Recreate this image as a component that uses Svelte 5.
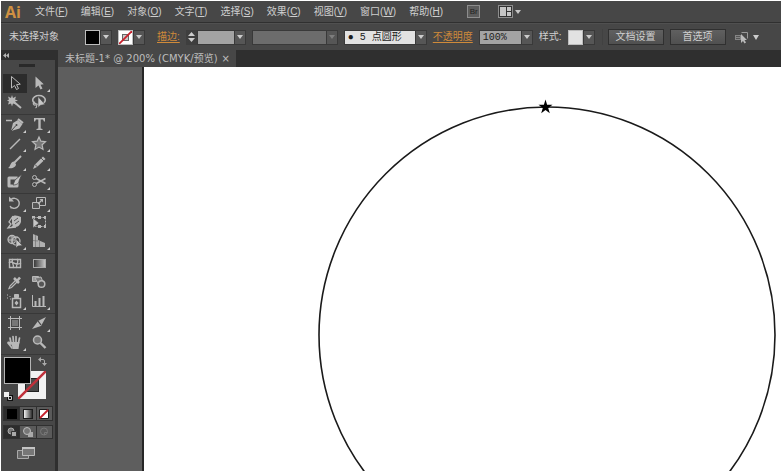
<script>
    let menus = [
        {name: "文件", key: "F"},
        {name: "编辑", key: "E"},
        {name: "对象", key: "O"},
        {name: "文字", key: "T"},
        {name: "选择", key: "S"},
        {name: "效果", key: "C"},
        {name: "视图", key: "V"},
        {name: "窗口", key: "W"},
        {name: "帮助", key: "H"},
    ]

    // every group is a block between two separators, tools go left, right, left...
    let toolGroups = [
        ["selection", "direct", "wand", "lasso"],
        ["pen", "type", "line", "star", "brush", "pencil", "blob", "scissors"],
        ["rotate", "scale", "warp", "transform", "builder", "perspective"],
        ["mesh", "gradient", "eyedropper", "blend", "spray", "graph"],
        ["artboard", "slice", "hand", "zoom"],
    ]
    let noFlyout = ["selection", "wand", "lasso", "blob", "transform", "mesh", "gradient", "blend", "artboard", "zoom"]

    let activeTool = "selection"
    let opacity = "100%"
</script>

<div class="app">
    <header class="menuBar">
        <span class="logo">Ai</span>
        <nav>
            {#each menus as menu (menu.key)}
                <button class="menuItem">{menu.name}(<u>{menu.key}</u>)</button>
            {/each}
        </nav>
        <button class="bridge" aria-label="Bridge">Br</button>
        <button class="arrange" aria-label="Arrange documents">
            <svg width="24" height="13" viewBox="0 0 24 13">
                <rect x="0.5" y="0.5" width="14" height="12" fill="#333" stroke="#8d8d8d"/>
                <path d="M2 2h6v9H2zM9 2h4v4H9zM9 7h4v4H9z" fill="#c6c6c6"/>
                <path d="M17 5h6l-3 4z" fill="#c6c6c6"/>
            </svg>
        </button>
    </header>

    <div class="controlBar">
        <span class="status">未选择对象</span>
        <button class="swatch" aria-label="Fill">
            <span class="chip black"></span>
            <span class="arrow"></span>
        </button>
        <button class="swatch" aria-label="Stroke">
            <span class="chip">
                <svg width="13" height="13" viewBox="0 0 13 13">
                    <rect x="3.5" y="3.5" width="6" height="6" fill="#ccc" stroke="#666"/>
                    <path d="M0 13L13 0" stroke="#c8212c" stroke-width="1.8"/>
                </svg>
            </span>
            <span class="arrow"></span>
        </button>
        <a class="link" href="#stroke">描边:</a>
        <div class="stroke">
            <div class="spinner">
                <button aria-label="Increase"><svg width="7" height="4" viewBox="0 0 7 4"><path d="M0 4h7L3.500 0z" fill="#ccc"/></svg></button>
                <button aria-label="Decrease"><svg width="7" height="4" viewBox="0 0 7 4"><path d="M0 0h7L3.500 4z" fill="#ccc"/></svg></button>
            </div>
            <div class="combo weight">
                <select aria-label="描边"><option></option></select>
                <span class="arrow"></span>
            </div>
        </div>
        <div class="combo profile">
            <select aria-label="Width profile" disabled><option></option></select>
            <span class="arrow"></span>
        </div>
        <div class="combo brushes">
            <select aria-label="Brush"><option>● 5 点圆形</option></select>
            <span class="arrow"></span>
        </div>
        <a class="link" href="#opacity">不透明度</a>
        <div class="combo opacity">
            <select aria-label="不透明度" bind:value={opacity}><option>100%</option></select>
            <span class="arrow"></span>
        </div>
        <span>样式:</span>
        <button class="swatch" aria-label="样式">
            <span class="chip light"></span>
            <span class="arrow"></span>
        </button>
        <div class="barButtons">
            <button class="barButton">文档设置</button>
            <button class="barButton">首选项</button>
        </div>
        <button class="similar" aria-label="Select similar">
            <svg width="25" height="13" viewBox="0 0 25 13">
                <path d="M0 4h6v5H0z" fill="#858585"/>
                <path d="M1 5.500h4M1 7.500h4" stroke="#555"/>
                <path d="M6.500 1.500h6v6" fill="none" stroke="#999"/>
                <path d="M6 3v9l2-2 1.500 2.500 1.500-1L9.500 9H12z" fill="#bbb"/>
                <path d="M18 4h6l-3 5z" fill="#ccc"/>
            </svg>
        </button>
    </div>

    <div class="workspace">
        <aside>
            <button class="collapse" aria-label="Collapse">
                <svg width="6" height="5" viewBox="0 0 6 5"><path d="M3 0v5L0 2.500zM6 0v5L3 2.500z" fill="#b5b5b5"/></svg>
            </button>
            <div class="grip"></div>
            {#each toolGroups as group}
                <div class="toolGroup">
                    {#each group as tool (tool)}
                        <button class="tool" class:active={activeTool == tool} aria-label={tool} on:click={() => activeTool = tool}>
                            <svg width="24" height="19" viewBox="0 0 24 19" fill="none" stroke="#b9b9b9">
                                {#if tool == "selection"}
                                    <path d="M8.500 2.500v11.500l3-2.500 2 4 2-1-2-3.800 3.800-.5z" fill="#2c2c2c"/>
                                {:else if tool == "direct"}
                                    <path d="M8.500 2.500v11.500l3-2.500 2 4 2-1-2-3.800 3.300-.5z" fill="#b9b9b9" stroke="none"/>
                                {:else if tool == "wand"}
                                    <path d="M9 2l1 3 3-1.500-1 3 3 1-3 1 1 3-3-1-1 3-1-3-3 1 1-3-2-1 2-1-1-3 3 1.500z" fill="#b9b9b9" stroke="none"/>
                                    <path d="M11 9l7 6" stroke-width="2"/>
                                {:else if tool == "lasso"}
                                    <ellipse cx="12" cy="7" rx="6.300" ry="4.500" stroke-width="1.600"/>
                                    <path d="M8 9c-3 1-1.500 3.500.5 3s1.500 2 0 3" stroke-width="1.200"/>
                                    <path d="M11 3.500v11l2.500-2.200 4.500-.8z" fill="#c6c6c6" stroke="#474747" stroke-width=".6"/>
                                {:else if tool == "pen"}
                                    <path d="M3 5.500h6" stroke-width="1.500"/>
                                    <path d="M8 16l2-8 5-3 4.500 4-3 4.500z" fill="#b9b9b9" stroke="none"/>
                                    <path d="M8 16l5-5.500" stroke="#444"/>
                                    <path d="M15 4l5 4" stroke-width="2"/>
                                    <circle cx="13.500" cy="10" r="1" fill="#444" stroke="none"/>
                                {:else if tool == "type"}
                                    <path d="M7 3h11v3.500h-1L16 4.500h-2.300v9l1.800.6v1h-6v-1l1.800-.6v-9H9L8 6.500H7z" fill="#b9b9b9" stroke="none"/>
                                {:else if tool == "line"}
                                    <path d="M7 15L17 5" stroke-width="1.400"/>
                                {:else if tool == "star"}
                                    <path d="M12 3l1.900 4.200 4.600.5-3.400 3.100.9 4.600L12 13.100l-4 2.300.9-4.600-3.400-3.100 4.600-.5z" fill="#777" stroke-width="1.200"/>
                                {:else if tool == "brush"}
                                    <path d="M18 3l-7 7" stroke-width="2"/>
                                    <path d="M10.500 8.500l2.500 2.500c0 3-3.500 5-8 4 2.500-1 2-5.500 5.500-6.500z" fill="#b9b9b9" stroke="none"/>
                                {:else if tool == "pencil"}
                                    <path d="M16 3.500l2.500 2.500-8.500 8-4 2 1.500-4z" fill="#b9b9b9" stroke="none"/>
                                    <path d="M8 11.500l2.500 2.500M14 5l3 3" stroke="#555"/>
                                {:else if tool == "blob"}
                                    <path d="M6 6h8v8H6z" stroke-width="3" stroke-linejoin="round"/>
                                    <path d="M19 2l-7 6-2 5c4 0 6-2 6-4z" fill="#c6c6c6" stroke="#474747" stroke-width=".8"/>
                                {:else if tool == "scissors"}
                                    <circle cx="7.500" cy="5.500" r="2"/>
                                    <circle cx="7.500" cy="12.500" r="2"/>
                                    <path d="M9.200 6.500l9.300 5M9.200 11.500l9.300-5" stroke-width="1.500"/>
                                {:else if tool == "rotate"}
                                    <path d="M8 5.500a5 5 0 1 1-1 6.500" stroke-width="1.400"/>
                                    <path d="M6 2.500v5h5z" fill="#b9b9b9" stroke="none"/>
                                    <path d="M7 13.500l2 1.500" stroke-dasharray="1 1"/>
                                {:else if tool == "scale"}
                                    <path d="M9.500 3.500h9v8h-9z"/>
                                    <path d="M5.500 8.500h7v6h-7z" fill="#555"/>
                                    <path d="M11 10l4-4" stroke-width="1.300"/>
                                    <path d="M12.500 5H16v3.500z" fill="#b9b9b9" stroke="none"/>
                                {:else if tool == "warp"}
                                    <path d="M9 4c3-3 6-1 9 0v5c-1 3-3 5-6 5H8c2-1 2-2 1-3z" fill="#b9b9b9" stroke="none"/>
                                    <path d="M10 3L6 9l2 2-3 4 8-1" stroke-width="1.300"/>
                                    <path d="M11 8l4-3M12 11l4-3" stroke="#555"/>
                                {:else if tool == "transform"}
                                    <path d="M6.500 4.500h12v9h-12z" stroke-dasharray="2 1"/>
                                    <path d="M5 3h3v3H5zM11 3h3v3h-3zM17 3h2v3h-2zM17 12h2v3h-2zM11 12h3v3h-3z" fill="#b9b9b9" stroke="none"/>
                                    <path d="M6 5v10l6-5z" fill="#c6c6c6" stroke="#474747" stroke-width=".6"/>
                                {:else if tool == "builder"}
                                    <circle cx="9" cy="7.500" r="4" fill="#666" stroke-width="1.300"/>
                                    <circle cx="13" cy="9" r="4" stroke-width="1.300"/>
                                    <path d="M5 8h9M9 4v8"/>
                                    <path d="M13 7v9l2-2 4.500-.5z" fill="#c6c6c6" stroke="#474747" stroke-width=".6"/>
                                {:else if tool == "perspective"}
                                    <path d="M6 2l5 2v4l7 3v4H6z" fill="#b0b0b0" stroke="none"/>
                                    <path d="M8.500 3v12M12.500 8v7M6 8.500l5 .5" stroke="#6a6a6a" stroke-width=".6"/>
                                {:else if tool == "mesh"}
                                    <path d="M6.500 5.500h11v8h-11z" stroke-width="1.400"/>
                                    <path d="M6 9c3-4 6 4 12 0M10 5c-3 3 2 5 0 9M14 5c3 3-2 5 0 9" stroke-width="1.300"/>
                                {:else if tool == "gradient"}
                                    <defs><linearGradient id="toolGradient"><stop stop-color="#333"/><stop offset="1" stop-color="#ccc"/></linearGradient></defs>
                                    <rect x="6.500" y="5.500" width="12" height="8" fill="url(#toolGradient)" stroke="#aaa"/>
                                {:else if tool == "eyedropper"}
                                    <path d="M13 7l-6 6-1 2.500 2.500-1 6-6" stroke-width="1.200"/>
                                    <path d="M11 5l5 5M14 8l3-3.500" stroke-width="2.600"/>
                                {:else if tool == "blend"}
                                    <path d="M5.500 3.500h6v5h-6z" fill="#999"/>
                                    <path d="M8 5l6-1 2 5-4 3z" fill="#777"/>
                                    <circle cx="14.500" cy="11" r="3.300" fill="#555" stroke-width="1.500"/>
                                {:else if tool == "spray"}
                                    <path d="M4 3h1M4 6h1M6.500 4.500h1M7 7h1" stroke-width="1.200"/>
                                    <path d="M11.500 2.500h4v3h-4z" fill="#b9b9b9"/>
                                    <path d="M9.500 6.500h8v9h-8z" stroke-width="1.500"/>
                                    <path d="M13.500 8.500l2 2.500-2 2.500-2-2.500z" fill="#b9b9b9" stroke="none"/>
                                {:else if tool == "graph"}
                                    <path d="M5.500 3v11.500H19"/>
                                    <path d="M8.500 14V9M12.500 14V6M16.500 14V4" stroke-width="2"/>
                                {:else if tool == "artboard"}
                                    <path d="M7.500 2v14M16.500 2v14M5 4.500h14M5 13.500h14"/>
                                    <path d="M9 6h6v6H9z" fill="#777" stroke="none"/>
                                {:else if tool == "slice"}
                                    <path d="M19 3l-8 4-6 8 9-3z" fill="#b9b9b9" stroke="none"/>
                                    <path d="M11 7l3 4" stroke="#444" stroke-width="1.200"/>
                                {:else if tool == "hand"}
                                    <path d="M9 15l-4-5c0-1 1-1 3 1M8 10L7 5M10.500 9L10 3.500M13 9V3.500M15.500 10l1-5" stroke-width="1.700" stroke-linecap="round"/>
                                    <path d="M7.500 9h9l-1 7H10z" fill="#b9b9b9" stroke="none"/>
                                {:else if tool == "zoom"}
                                    <circle cx="10.500" cy="7" r="4" fill="#777" stroke-width="1.500"/>
                                    <path d="M13.500 10l5 5" stroke-width="2.400"/>
                                {/if}
                                {#if !noFlyout.includes(tool)}
                                    <path d="M23 15v3h-3z" fill="#ccc" stroke="none"/>
                                {/if}
                            </svg>
                        </button>
                    {/each}
                </div>
            {/each}

            <div class="paint">
                <button class="paintStroke" aria-label="Stroke colour">
                    <svg width="28" height="28" viewBox="0 0 28 28">
                        <rect width="28" height="28" fill="#f2f2f2"/>
                        <rect x="7.500" y="7.500" width="13" height="13" fill="#4a4a4a" stroke="#222"/>
                        <path d="M0 28L28 0" stroke="#c0303a" stroke-width="2.500"/>
                    </svg>
                </button>
                <button class="paintFill" aria-label="Fill colour"></button>
                <button class="swap" aria-label="Swap">
                    <svg width="9" height="9" viewBox="0 0 9 9" fill="none" stroke="#aaa"><path d="M2 2.500h3q1.500 0 1.500 1.500v3"/><path d="M3 0v5L0 2.500zM4 6h5L6.500 9z" fill="#aaa" stroke="none"/></svg>
                </button>
                <button class="defaults" aria-label="Default colours">
                    <svg width="9" height="9" viewBox="0 0 9 9"><path d="M3 3h6v6H3z" fill="#111"/><path d="M4.500 4.500h3v3h-3z" fill="none" stroke="#ccc"/><path d="M0 0h5v5H0z" fill="#eee"/></svg>
                </button>
            </div>

            <div class="modes">
                <button class="on" aria-label="Color"><svg width="12" height="12" viewBox="0 0 12 12"><path d="M1 1h10v10H1z" fill="#000"/></svg></button>
                <button aria-label="Gradient">
                    <svg width="12" height="12" viewBox="0 0 12 12">
                        <defs><linearGradient id="modeGradient"><stop stop-color="#fff"/><stop offset="1" stop-color="#222"/></linearGradient></defs>
                        <rect x="1.500" y="1.500" width="9" height="9" fill="url(#modeGradient)" stroke="#1c1c1c"/>
                    </svg>
                </button>
                <button aria-label="None"><svg width="12" height="12" viewBox="0 0 12 12"><path d="M1.500 1.500h9v9h-9z" fill="#fff" stroke="#1c1c1c"/><path d="M2 10l8-8" stroke="#c8212c" stroke-width="1.800"/></svg></button>
            </div>
            <div class="modes draw">
                <button class="on" aria-label="Draw normal"><svg width="12" height="12" viewBox="0 0 12 12"><circle cx="5" cy="5" r="3" fill="#777" stroke="#aaa"/><path d="M5.500 5.500h5v5h-5z" fill="#aaa" stroke="#333"/></svg></button>
                <button aria-label="Draw behind"><svg width="12" height="12" viewBox="0 0 12 12"><path d="M6 6h5v5H6z" fill="#aaa"/><circle cx="5" cy="5" r="3.500" fill="#777" stroke="#bbb"/></svg></button>
                <button aria-label="Draw inside" disabled><svg width="12" height="12" viewBox="0 0 12 12" fill="none" stroke="#777"><circle cx="6" cy="5.500" r="3.500"/><path d="M6.500 9V6.500h3"/></svg></button>
            </div>
            <button class="screenMode" aria-label="Screen mode">
                <svg width="18" height="14" viewBox="0 0 18 14">
                    <path d="M.5 4.500h11v8H.5z" fill="#666" stroke="#aaa"/>
                    <path d="M5.500 1.500h12v8h-12z" fill="#777" stroke="#bbb"/>
                    <path d="M5 1h13v2H5z" fill="#c4c4c4"/>
                </svg>
            </button>
        </aside>

        <main>
            <div class="tabs">
                <div class="tab">
                    <span>未标题-1* @ 200% (CMYK/预览)</span>
                    <button aria-label="Close">×</button>
                </div>
            </div>
            <div class="canvas">
                <div class="artboard">
                    <svg width="100%" height="100%">
                        <circle cx="403" cy="268" r="228" fill="none" stroke="#1a1a1a" stroke-width="1.600"/>
                        <path d="M401.500 32.500l1.600 5.200h5.400l-4.300 3.300 1.600 5.200-4.300-3.200-4.300 3.200 1.600-5.200-4.300-3.300h5.400z" fill="#000"/>
                    </svg>
                </div>
            </div>
        </main>
    </div>
</div>

<style>
    :global(body) {
        background-color: #ffffff;
    }

    .app {
        display: flex;
        flex-direction: column;
        height: 100vh;
        box-sizing: border-box;
        padding: 1px 0 0 1px;
        overflow: hidden;
        font-family: "Liberation Sans", "Noto Sans CJK SC", sans-serif;
        font-size: 10px;
        line-height: 14px;
        color: #cfcfcf;
    }

    button {
        display: flex;
        align-items: center;
        justify-content: center;
        margin: 0;
        padding: 0;
        border: none;
        background: none;
        font: inherit;
        color: inherit;
        white-space: nowrap;
    }

    svg {
        display: block;
        flex: none;
    }

    .menuBar {
        display: flex;
        align-items: center;
        flex: none;
        height: 21px;
        padding-left: 4px;
        background-color: #474747;
        border-bottom: 1px solid #303030;
    }

    .logo {
        width: 30px;
        font-family: "Open Sans", sans-serif;
        font-size: 16px;
        font-weight: bold;
        color: #cf9142;
    }

    nav {
        display: flex;
        gap: 13px;
    }

    .bridge {
        width: 13px;
        height: 13px;
        margin-left: 24px;
        box-sizing: border-box;
        border: 1px solid #8d8d8d;
        background-color: #5c5c5c;
        font-size: 8px;
        color: #222222;
    }

    .arrange {
        margin-left: 18px;
    }

    .controlBar {
        display: flex;
        align-items: center;
        gap: 6px;
        flex: none;
        height: 26px;
        padding-left: 8px;
        background-color: #474747;
        border-top: 1px solid #505050;
        white-space: nowrap;
    }

    .status {
        width: 70px;
    }

    .swatch {
        height: 15px;
    }

    .chip {
        width: 13px;
        height: 13px;
        border: 1px solid #bdbdbd;
        background-color: #ffffff;
    }

    .chip.black {
        background-color: #000000;
    }

    .chip.light {
        background-color: #e2e2e2;
    }

    .arrow {
        display: flex;
        align-items: center;
        justify-content: center;
        width: 12px;
        height: 15px;
        box-sizing: border-box;
        border: 1px solid #393939;
        background-color: #565656;
    }

    .arrow::after {
        content: "";
        border: 3px solid transparent;
        border-top: 4px solid #cccccc;
        border-bottom: none;
    }

    .link {
        color: #cf8a3a;
        text-decoration: underline;
        text-underline-offset: 2px;
    }

    .swatch + .link {
        margin-left: 6px;
    }

    .stroke {
        display: flex;
    }

    .spinner {
        display: flex;
        flex-direction: column;
        justify-content: space-evenly;
        width: 11px;
        background-color: #3e3e3e;
    }

    .combo {
        position: relative;
        height: 15px;
    }

    .combo select {
        appearance: none;
        display: block;
        width: 100%;
        height: 15px;
        margin: 0;
        padding: 0 13px 0 3px;
        border: 1px solid #393939;
        border-radius: 0;
        background-color: #a3a3a3;
        font-family: "Liberation Mono", "Noto Sans CJK SC", monospace;
        font-size: 10px;
        line-height: 13px;
        color: #1c1c1c;
        opacity: 1;
    }

    .combo .arrow {
        position: absolute;
        top: 0;
        right: 0;
        pointer-events: none;
    }

    .weight {
        width: 49px;
    }

    .profile {
        width: 86px;
    }

    .profile select {
        background-color: #6c6c6c;
    }

    .profile .arrow::after {
        border-top-color: #7d7d7d;
    }

    .brushes {
        width: 83px;
    }

    .brushes select {
        background-color: #e2e2e2;
    }

    .opacity {
        width: 54px;
    }

    .barButtons {
        display: flex;
        gap: 6px;
        margin-left: 1px;
        padding-left: 5px;
        border-left: 1px solid #414141;
    }

    .barButton {
        width: 56px;
        height: 16px;
        box-sizing: border-box;
        border: 1px solid #303030;
        background: linear-gradient(#606060, #505050);
    }

    .similar {
        margin-left: 3px;
    }

    .workspace {
        display: flex;
        flex: 1;
        min-height: 0;
    }

    aside {
        flex: none;
        width: 54px;
        background-color: #474747;
        border-right: 3px solid #2f2f2f;
    }

    .collapse {
        width: 100%;
        height: 10px;
        padding-left: 2px;
        justify-content: flex-start;
        background-color: #2f2f2f;
    }

    .grip {
        width: 16px;
        height: 3px;
        margin: 4px 0 7px 18px;
        background-color: #292929;
    }

    .toolGroup {
        display: grid;
        grid-template-columns: 24px 24px;
        padding: 0 2px 2px;
        border-bottom: 1px solid #383838;
    }

    .tool {
        height: 19px;
    }

    .tool.active {
        background-color: #2c2c2c;
    }

    .paint {
        position: relative;
        height: 44px;
        margin: 2px 3px 5px;
    }

    .paint button {
        position: absolute;
    }

    .paintFill {
        top: 0;
        left: 0;
        width: 27px;
        height: 27px;
        border: 1px solid #b5b5b5;
        background-color: #000000;
    }

    .paintStroke {
        left: 14px;
        top: 14px;
    }

    .swap {
        left: 34px;
        top: 0;
    }

    .defaults {
        left: 0;
        bottom: 0;
    }

    .modes {
        display: flex;
        gap: 1px;
        margin: 0 2px 4px;
        padding: 1px;
        background-color: #303030;
    }

    .modes button {
        flex: 1;
        height: 13px;
        background-color: #5a5a5a;
    }

    .modes button.on {
        background-color: #2c2c2c;
    }

    .modes.draw button {
        height: 12px;
    }

    .screenMode {
        margin: 7px 0 0 16px;
    }

    main {
        display: flex;
        flex-direction: column;
        flex: 1;
        min-width: 0;
    }

    .tabs {
        display: flex;
        flex: none;
        height: 17px;
        background-color: #2f2f2f;
    }

    .tab {
        display: flex;
        align-items: center;
        gap: 4px;
        padding: 0 6px 0 7px;
        background-color: #474747;
        font-family: "DejaVu Sans", "Noto Sans CJK SC", sans-serif;
        color: #bdbdbd;
    }

    .canvas {
        flex: 1;
        min-height: 0;
        padding-left: 84px;
        background-color: #5e5e5e;
    }

    .artboard {
        height: 100%;
        border-left: 2px solid #262626;
        background-color: #ffffff;
    }
</style>
